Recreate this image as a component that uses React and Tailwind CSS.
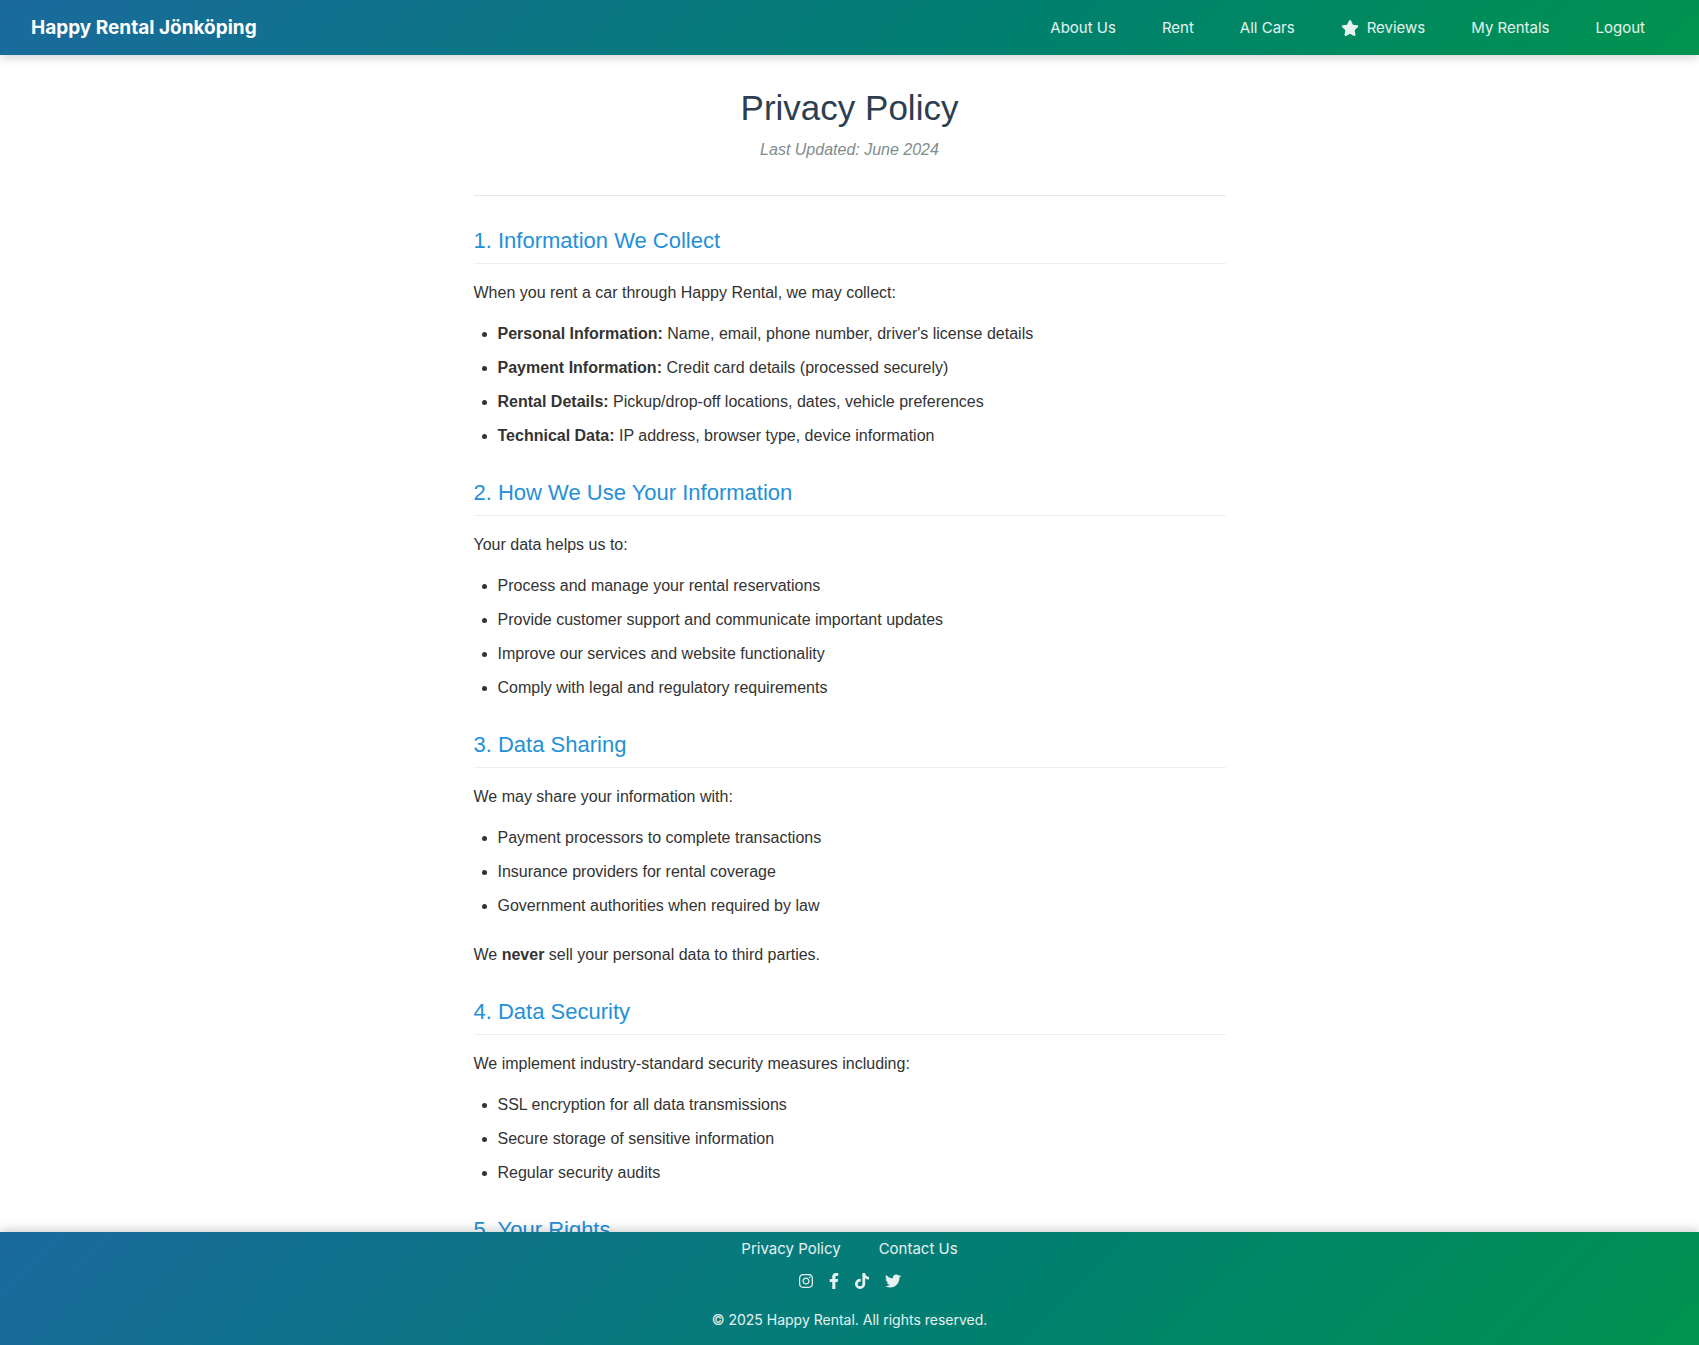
import { FaFacebookF, FaInstagram, FaTiktok, FaTwitter } from "react-icons/fa";
import { FaStar } from "react-icons/fa6";

const navLinks = [
  { label: "About Us" },
  { label: "Rent" },
  { label: "All Cars" },
  { label: "Reviews", icon: FaStar },
  { label: "My Rentals" },
  { label: "Logout" },
];

const socials = [
  { label: "Instagram", icon: FaInstagram, width: "w-[14px]" },
  { label: "Facebook", icon: FaFacebookF, width: "w-[10px]" },
  { label: "TikTok", icon: FaTiktok, width: "w-[14px]" },
  { label: "Twitter", icon: FaTwitter, width: "w-4" },
];

const sections = [
  {
    title: "1. Information We Collect",
    intro: "When you rent a car through Happy Rental, we may collect:",
    items: [
      { term: "Personal Information:", text: "Name, email, phone number, driver's license details" },
      { term: "Payment Information:", text: "Credit card details (processed securely)" },
      { term: "Rental Details:", text: "Pickup/drop-off locations, dates, vehicle preferences" },
      { term: "Technical Data:", text: "IP address, browser type, device information" },
    ],
  },
  {
    title: "2. How We Use Your Information",
    intro: "Your data helps us to:",
    items: [
      { text: "Process and manage your rental reservations" },
      { text: "Provide customer support and communicate important updates" },
      { text: "Improve our services and website functionality" },
      { text: "Comply with legal and regulatory requirements" },
    ],
  },
  {
    title: "3. Data Sharing",
    intro: "We may share your information with:",
    items: [
      { text: "Payment processors to complete transactions" },
      { text: "Insurance providers for rental coverage" },
      { text: "Government authorities when required by law" },
    ],
    note: (
      <>
        We <strong>never</strong> sell your personal data to third parties.
      </>
    ),
  },
  {
    title: "4. Data Security",
    intro: "We implement industry-standard security measures including:",
    items: [
      { text: "SSL encryption for all data transmissions" },
      { text: "Secure storage of sensitive information" },
      { text: "Regular security audits" },
    ],
  },
  { title: "5. Your Rights" },
];

function Header() {
  return (
    <header className="z-10 flex shrink-0 items-center justify-between bg-[linear-gradient(135deg,#1a6a9d_0%,#00806f_60%,#00934f_100%)] px-[31px] py-3 font-['Inter',sans-serif] shadow-[0_2px_10px_rgba(0,0,0,0.2)]">
      <a href="#" className="text-[19px] leading-[31px] font-bold text-white">
        Happy Rental Jönköping
      </a>
      <nav>
        <ul className="flex items-center">
          {navLinks.map(({ label, icon: Icon }) => (
            <li key={label}>
              <a href="#" className="flex items-center gap-2 px-[23px] text-[15px] leading-6 text-white/90">
                {Icon && <Icon className="size-[18px]" />}
                {label}
              </a>
            </li>
          ))}
        </ul>
      </nav>
    </header>
  );
}

function Section({ title, intro, items, note }) {
  return (
    <section className="mb-[30px]">
      <h2 className="mb-4 border-b border-[#ecf0f1] pb-2 text-[22px] leading-7 text-[#2490d8]">{title}</h2>
      {intro && <p>{intro}</p>}
      {items && (
        <ul className="mt-[15px] list-disc space-y-2 pl-6">
          {items.map(({ term, text }) => (
            <li key={text}>
              {term && <strong>{term}</strong>} {text}
            </li>
          ))}
        </ul>
      )}
      {note && <p className="mt-[23px]">{note}</p>}
    </section>
  );
}

function Footer() {
  return (
    <footer className="z-10 flex shrink-0 flex-col items-center bg-[linear-gradient(135deg,#1a6a9d_0%,#00806f_60%,#00934f_100%)] pt-1 pb-[14px] font-['Inter',sans-serif] text-white/90 shadow-[0_-2px_10px_rgba(0,0,0,0.2)]">
      <nav className="flex gap-[38px] text-[15px] leading-[26px]">
        <a href="#">Privacy Policy</a>
        <a href="#">Contact Us</a>
      </nav>
      <div className="mt-[11px] flex gap-4">
        {socials.map(({ label, icon: Icon, width }) => (
          <a key={label} href="#" aria-label={label}>
            <Icon className={`h-4 ${width}`} />
          </a>
        ))}
      </div>
      <p className="mt-5 text-sm leading-[22px]">© 2025 Happy Rental. All rights reserved.</p>
    </footer>
  );
}

export default function App() {
  return (
    <div className="flex h-screen flex-col bg-white">
      <Header />
      <main className="min-h-0 flex-1 overflow-hidden font-['Liberation_Sans',Arial,sans-serif] text-base leading-[26px] text-[#333]">
        <div className="mx-auto max-w-[800px] px-6 pt-8">
          <div className="mb-[31px] border-b border-[#e5e7e8] pb-8 text-center">
            <h1 className="text-[35px] leading-[42px] text-[#2c3e50]">Privacy Policy</h1>
            <p className="mt-2 text-[#7f8c8d] italic">Last Updated: June 2024</p>
          </div>
          {sections.map((section) => (
            <Section key={section.title} {...section} />
          ))}
        </div>
      </main>
      <Footer />
    </div>
  );
}
